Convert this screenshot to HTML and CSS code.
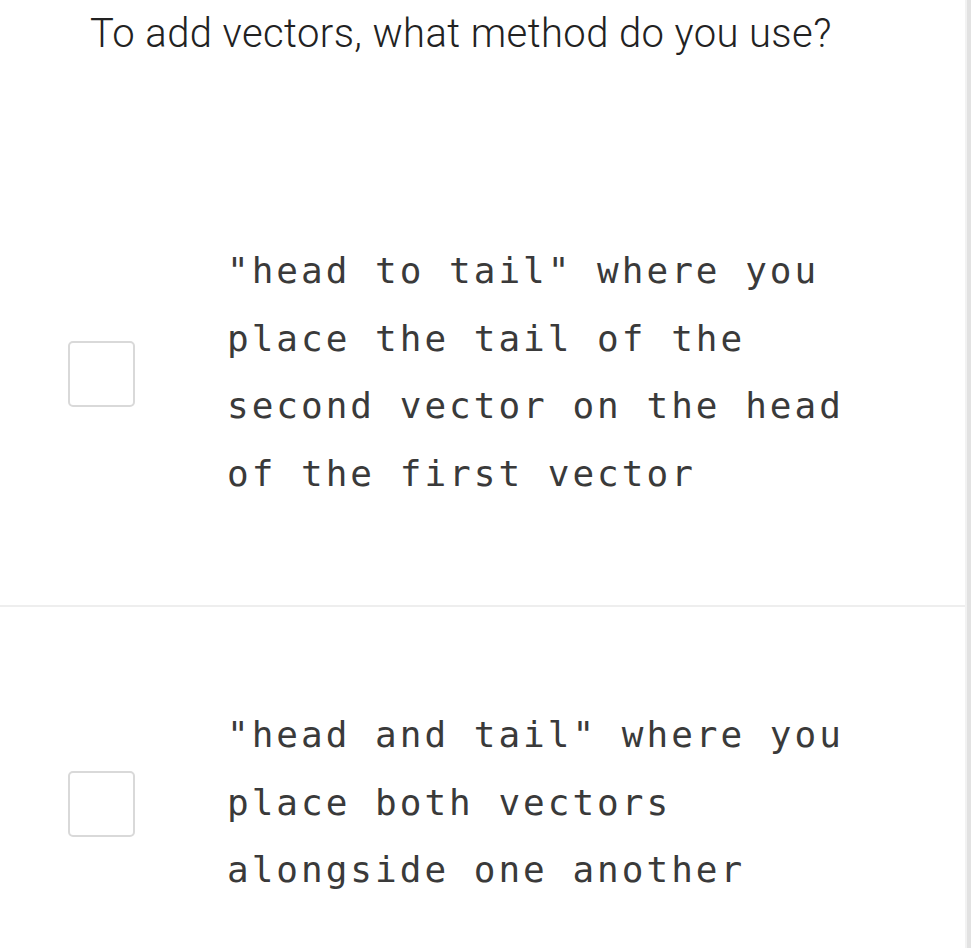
FILE: index.html
```html
<!DOCTYPE html>
<html lang="en">
<head>
<meta charset="utf-8">
<title>Question</title>
<link rel="stylesheet" href="styles.css">
</head>
<body>
<div class="page">
  <div class="inner">
    <h1 class="question">To add vectors, what method do you use?</h1>
    <div class="options">
      <label class="option">
        <span class="box"></span>
        <span class="answer">"head to tail" where you place the tail of the second vector on the head of the first vector</span>
      </label>
      <label class="option">
        <span class="box"></span>
        <span class="answer">"head and tail" where you place both vectors alongside one another</span>
      </label>
    </div>
  </div>
</div>
</body>
</html>
```
FILE: styles.css
```css
html, body {
  margin: 0;
  padding: 0;
  background: #ffffff;
}

.page {
  min-height: 100vh;
  box-sizing: border-box;
  border-right: 4px solid #e2e2e2;
}

.inner {
  min-height: 100vh;
  box-sizing: border-box;
  border-right: 2px solid #f2f2f2;
}

.question {
  margin: 0;
  padding: 10px 0 0 90px;
  font-family: Roboto, "Liberation Sans", sans-serif;
  font-weight: 300;
  font-size: 40px;
  letter-spacing: 0.4px;
  line-height: 47px;
  color: #222222;
  margin-bottom: 86px;
}

.options {
  display: flex;
  flex-direction: column;
}

.option {
  display: flex;
  align-items: center;
  padding: 94px 0 98px;
}

.option + .option {
  border-top: 2px solid #eeeeee;
}

.box {
  flex: none;
  width: 67px;
  height: 66px;
  box-sizing: border-box;
  border: 2px solid #d9d9d9;
  border-radius: 5px;
  margin-left: 68px;
  margin-top: 4px;
  background: #ffffff;
}

.answer {
  margin-left: 92px;
  width: 640px;
  font-family: "DejaVu Sans Mono", "Liberation Mono", monospace;
  font-size: 36px;
  letter-spacing: 3px;
  line-height: 67.5px;
  color: #3a3a3a;
}
```
